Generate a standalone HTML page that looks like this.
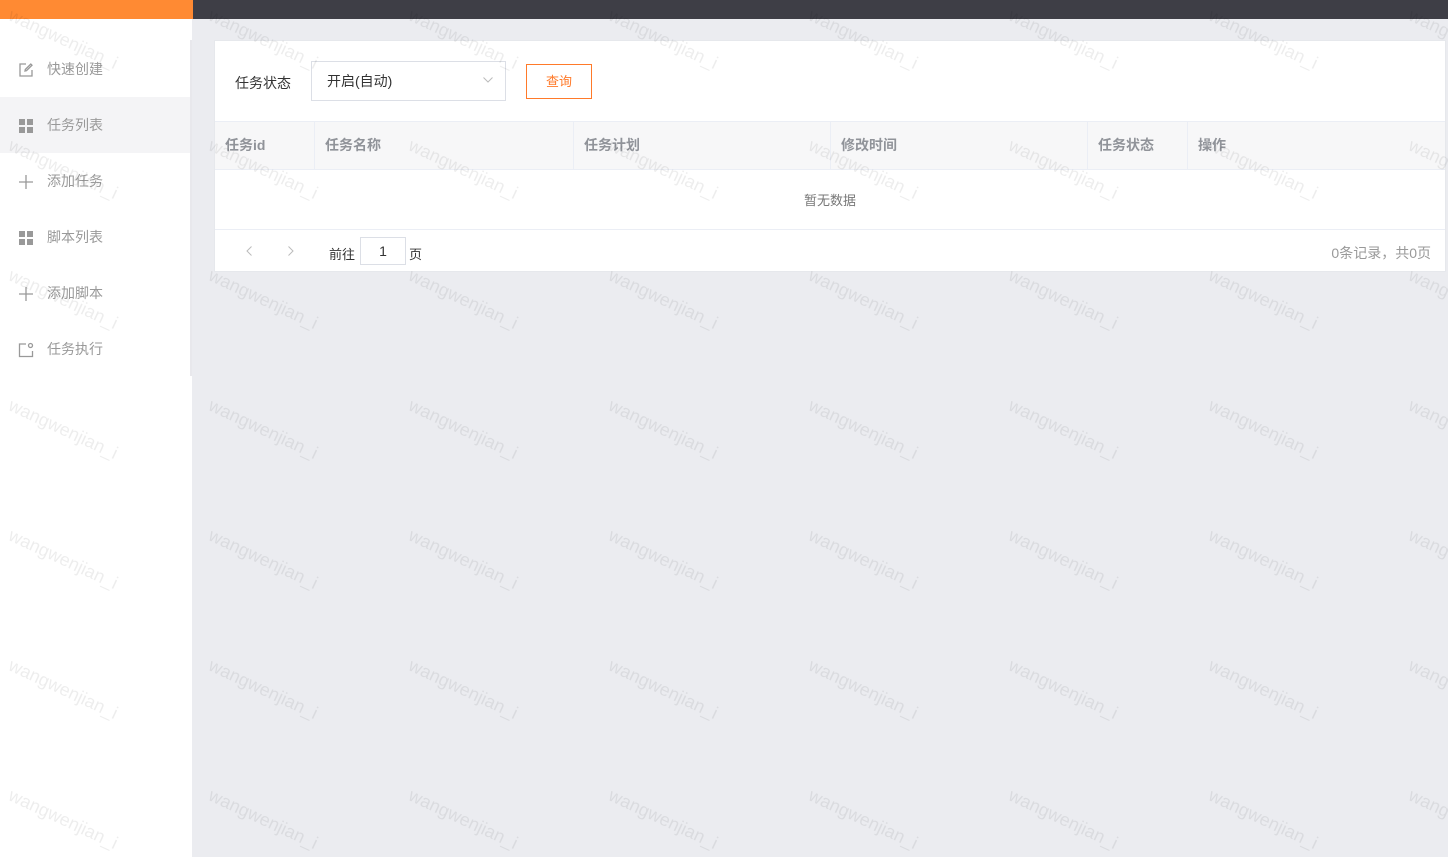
<!DOCTYPE html>
<html><head><meta charset="utf-8"><style>
*{margin:0;padding:0;box-sizing:border-box}
body{width:1448px;height:857px;overflow:hidden;background:#ebecf0;font-family:"Liberation Sans","Noto Sans CJK SC",sans-serif;position:relative}
.top1{position:absolute;left:0;top:0;width:193px;height:19px;background:#ff8a33}
.top2{position:absolute;left:193px;top:0;right:0;height:19px;background:#3e3e46}
.side{position:absolute;left:0;top:19px;width:192px;height:838px;background:#fff}
.sb{position:absolute;left:190px;top:40px;width:2px;height:336px;background:#e8e8ec}
.mi{position:absolute;left:0;width:190px;height:56px;font-size:14px;color:#999;line-height:56px;padding-left:47px}
.mi.act{background:#f4f4f6}
.mi svg{position:absolute;left:18px;top:21px}
.card{position:absolute;left:214px;top:40px;width:1232px;height:232px;background:#fff;border:1px solid #e6e8ec}
.lbl{position:absolute;left:20px;top:32px;font-size:14px;color:#333}
.sel{position:absolute;left:96px;top:20px;width:195px;height:40px;border:1px solid #dcdfe6;font-size:14px;color:#333;line-height:38px;padding-left:15px}
.btn{position:absolute;left:311px;top:23px;width:66px;height:35px;border:1px solid #ff7a2a;color:#ff7a2a;font-size:13px;text-align:center;line-height:33px}
.th{position:absolute;top:80px;left:0;width:1230px;height:49px;background:#f7f7f8;border-top:1px solid #ebeef5;border-bottom:1px solid #ebeef5}
.th div{position:absolute;top:0;height:47px;line-height:47px;font-size:14px;font-weight:bold;color:#909399;padding-left:10px;border-right:1px solid #ebeef5}
.empty{position:absolute;top:129px;left:0;width:1230px;height:60px;border-bottom:1px solid #ebeef5;text-align:center;line-height:62px;font-size:13px;color:#777}
.pg{position:absolute;top:189px;left:0;width:1230px;height:42px;font-size:13px;color:#333}
.wm{position:absolute;font-size:18px;color:rgba(0,0,0,0.07);transform:rotate(25deg);transform-origin:left top;white-space:nowrap;font-family:"Liberation Sans",sans-serif}
</style></head><body>
<div class="top1"></div><div class="top2"></div>
<div class="side"></div><div class="sb"></div>
<div class="mi" style="top:41px"><svg width="16" height="16" viewBox="0 0 16 16" fill="none" stroke="#999" stroke-width="1.3"><path d="M8 2H2v12h12V8"/><path d="M7 9l1.5-.3L14 3.2 12.8 2 7.3 7.5z"/></svg>快速创建</div>
<div class="mi act" style="top:97px"><svg width="16" height="16" viewBox="0 0 16 16" fill="#999"><rect x="1" y="1" width="6" height="6"/><rect x="9" y="1" width="6" height="6"/><rect x="1" y="9" width="6" height="6"/><rect x="9" y="9" width="6" height="6"/></svg>任务列表</div>
<div class="mi" style="top:153px"><svg width="16" height="16" viewBox="0 0 16 16" stroke="#999" stroke-width="1.3"><path d="M8 1v14M1 8h14"/></svg>添加任务</div>
<div class="mi" style="top:209px"><svg width="16" height="16" viewBox="0 0 16 16" fill="#999"><rect x="1" y="1" width="6" height="6"/><rect x="9" y="1" width="6" height="6"/><rect x="1" y="9" width="6" height="6"/><rect x="9" y="9" width="6" height="6"/></svg>脚本列表</div>
<div class="mi" style="top:265px"><svg width="16" height="16" viewBox="0 0 16 16" stroke="#999" stroke-width="1.3"><path d="M8 1v14M1 8h14"/></svg>添加脚本</div>
<div class="mi" style="top:321px"><svg width="16" height="16" viewBox="0 0 16 16" fill="none" stroke="#999" stroke-width="1.3"><path d="M8 2H1.5v12.5h13V9"/><circle cx="12.5" cy="3.5" r="2"/></svg>任务执行</div>
<div class="card">
<div class="lbl">任务状态</div>
<div class="sel">开启(自动)<svg style="position:absolute;right:12px;top:15px" width="10" height="6" viewBox="0 0 10 6" fill="none" stroke="#bbb"><path d="M.5.5 5 5 9.5.5"/></svg></div>
<div class="btn">查询</div>
<div class="th">
<div style="left:0;width:100px">任务id</div>
<div style="left:100px;width:259px">任务名称</div>
<div style="left:359px;width:257px">任务计划</div>
<div style="left:616px;width:257px">修改时间</div>
<div style="left:873px;width:100px">任务状态</div>
<div style="left:973px;width:256px;border:none">操作</div>
</div>
<div class="empty">暂无数据</div>
<div class="pg">
<svg style="position:absolute;left:31px;top:16px" width="6" height="10" viewBox="0 0 6 10" fill="none" stroke="#bbb"><path d="M5.5.5 1 5l4.5 4.5"/></svg>
<svg style="position:absolute;left:73px;top:16px" width="6" height="10" viewBox="0 0 6 10" fill="none" stroke="#bbb"><path d="M.5.5 5 5 .5 9.5"/></svg>
<span style="position:absolute;left:114px;top:14px">前往</span>
<div style="position:absolute;left:145px;top:7px;width:46px;height:28px;border:1px solid #dcdfe6;text-align:center;line-height:26px;font-size:14px">1</div>
<span style="position:absolute;left:194px;top:14px">页</span>
<span style="position:absolute;right:14px;top:13px;color:#999;font-size:14px">0条记录，共0页</span>
</div>
</div>
<div id="w"></div>
<script>
var h='';for(var y=5;y<857;y+=130)for(var x=14;x<1448;x+=200)h+='<div class="wm" style="left:'+x+'px;top:'+y+'px">wangwenjian_i</div>';document.getElementById('w').innerHTML=h;
</script>
</body></html>
